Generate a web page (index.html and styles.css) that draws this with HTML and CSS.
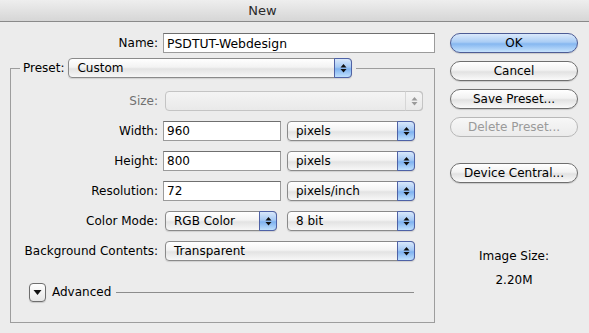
FILE: index.html
```html
<!DOCTYPE html>
<html lang="en">
<head>
    <meta charset="UTF-8">
    <title>New</title>
    <link rel="stylesheet" href="styles.css">
</head>
<body>
    <div class="titlebar">New</div>
    <div class="content">
        <div class="form">
            <div class="name-row">
                <label class="lbl">Name:</label>
                <input class="field name-field" type="text" value="PSDTUT-Webdesign">
            </div>
            <fieldset class="group">
                <legend class="group-head">
                    <span class="lbl">Preset:</span>
                    <div class="popup preset-popup"><span>Custom</span><span class="arrows"><svg width="7" height="10" viewBox="0 0 7 10"><path d="M3.5 1 L6.5 4.5 H0.5Z M3.5 9.5 L6.5 6 H0.5Z" fill="#111"/></svg></span></div>
                </legend>
                <div class="grid">
                    <label class="lbl disabled">Size:</label>
                    <div class="controls">
                        <div class="popup size-popup off"><span></span><span class="arrows"><svg width="7" height="10" viewBox="0 0 7 10"><path d="M3.5 1 L6.5 4.5 H0.5Z M3.5 9.5 L6.5 6 H0.5Z" fill="#9a9a9a"/></svg></span></div>
                    </div>

                    <label class="lbl">Width:</label>
                    <div class="controls">
                        <input class="field num-field" type="text" value="960">
                        <div class="popup unit-popup"><span>pixels</span><span class="arrows"><svg width="7" height="10" viewBox="0 0 7 10"><path d="M3.5 1 L6.5 4.5 H0.5Z M3.5 9.5 L6.5 6 H0.5Z" fill="#111"/></svg></span></div>
                    </div>

                    <label class="lbl">Height:</label>
                    <div class="controls">
                        <input class="field num-field" type="text" value="800">
                        <div class="popup unit-popup"><span>pixels</span><span class="arrows"><svg width="7" height="10" viewBox="0 0 7 10"><path d="M3.5 1 L6.5 4.5 H0.5Z M3.5 9.5 L6.5 6 H0.5Z" fill="#111"/></svg></span></div>
                    </div>

                    <label class="lbl">Resolution:</label>
                    <div class="controls">
                        <input class="field num-field" type="text" value="72">
                        <div class="popup unit-popup"><span>pixels/inch</span><span class="arrows"><svg width="7" height="10" viewBox="0 0 7 10"><path d="M3.5 1 L6.5 4.5 H0.5Z M3.5 9.5 L6.5 6 H0.5Z" fill="#111"/></svg></span></div>
                    </div>

                    <label class="lbl">Color Mode:</label>
                    <div class="controls">
                        <div class="popup mode-popup"><span>RGB Color</span><span class="arrows"><svg width="7" height="10" viewBox="0 0 7 10"><path d="M3.5 1 L6.5 4.5 H0.5Z M3.5 9.5 L6.5 6 H0.5Z" fill="#111"/></svg></span></div>
                        <div class="popup unit-popup"><span>8 bit</span><span class="arrows"><svg width="7" height="10" viewBox="0 0 7 10"><path d="M3.5 1 L6.5 4.5 H0.5Z M3.5 9.5 L6.5 6 H0.5Z" fill="#111"/></svg></span></div>
                    </div>

                    <label class="lbl">Background Contents:</label>
                    <div class="controls">
                        <div class="popup bg-popup"><span>Transparent</span><span class="arrows"><svg width="7" height="10" viewBox="0 0 7 10"><path d="M3.5 1 L6.5 4.5 H0.5Z M3.5 9.5 L6.5 6 H0.5Z" fill="#111"/></svg></span></div>
                    </div>
                </div>
                <div class="advanced">
                    <span class="disclosure"><svg width="9" height="7" viewBox="0 0 9 7"><path d="M0.5 1 H8.5 L4.5 6Z" fill="#111"/></svg></span>
                    <span>Advanced</span>
                    <span class="rule"></span>
                </div>
            </fieldset>
        </div>
        <div class="side">
            <button class="btn default">OK</button>
            <button class="btn">Cancel</button>
            <button class="btn">Save Preset...</button>
            <button class="btn" disabled>Delete Preset...</button>
            <button class="btn device">Device Central...</button>
            <div class="size-label">Image Size:</div>
            <div class="size-value">2.20M</div>
        </div>
    </div>
</body>
</html>
```

FILE: styles.css
```css
body {
    margin: 0;
    background-color: #ececec;
    font-family: "DejaVu Sans", Verdana, sans-serif;
    font-size: 12px;
    color: #000;
}

.titlebar {
    height: 21px;
    line-height: 21px;
    border-bottom: 1px solid #8a8a8a;
    background: linear-gradient(#eeeeee, #d6d6d6);
    text-align: center;
    padding-right: 64px;
    font-size: 13px;
    color: #2a2a2a;
}

.content {
    display: flex;
    gap: 15px;
    padding: 11px 0 0 10px;
}

.form {
    width: 425px;
}

.name-row {
    display: flex;
    align-items: center;
    gap: 5px;
}

.lbl {
    white-space: nowrap;
}

.name-row .lbl {
    width: 148px;
    text-align: right;
}

.field {
    box-sizing: border-box;
    height: 20px;
    margin: 0;
    padding: 0 3px;
    border: 1px solid #9b9b9b;
    border-top-color: #6f6f6f;
    background: #fff;
    font-family: inherit;
    font-size: 12px;
    color: #000;
    outline: none;
}

.name-field {
    width: 272px;
    font-size: 12.4px;
}

.num-field {
    width: 118px;
}

/* group box */
.group {
    margin: 5px 0 0;
    padding: 13px 0 20px;
    border: 1px solid #9d9d9d;
    min-width: 0;
}

.group-head {
    display: flex;
    align-items: center;
    gap: 4px;
    margin-left: 9px;
    padding: 0 4px 0 3px;
}

.popup {
    box-sizing: border-box;
    height: 20px;
    display: flex;
    align-items: center;
    padding-left: 8px;
    border: 1px solid #8a8a8a;
    border-radius: 4px;
    background: linear-gradient(#ffffff, #f3f3f3 45%, #e3e3e3 55%, #f7f7f7);
    box-shadow: 0 1px 1px rgba(0, 0, 0, 0.12);
    white-space: nowrap;
}

.arrows {
    box-sizing: border-box;
    margin: -1px -1px -1px auto;
    width: 18px;
    height: 20px;
    display: flex;
    align-items: center;
    justify-content: center;
    border: 1px solid #4f62a6;
    border-radius: 0 4px 4px 0;
    background: linear-gradient(#d9e8fb, #a5c9f4 45%, #7fb2ef 55%, #bfe0fd);
}

.popup.off {
    border-color: #c4c4c4;
    background: linear-gradient(#f4f4f4, #e9e9e9);
    box-shadow: none;
}

.popup.off .arrows {
    border-color: #c4c4c4;
    border-left-color: #d6d6d6;
    background: transparent;
}

.preset-popup { width: 284px; }
.size-popup { width: 258px; margin-left: 2px; }
.unit-popup { width: 128px; }
.mode-popup { width: 112px; margin-left: 2px; margin-right: 4px; }
.bg-popup { width: 250px; margin-left: 2px; }

.grid {
    display: grid;
    grid-template-columns: 147px auto;
    column-gap: 5px;
    row-gap: 10px;
    align-items: center;
}

.grid .lbl {
    text-align: right;
}

.lbl.disabled {
    color: #707070;
}

.controls {
    display: flex;
    align-items: center;
    gap: 6px;
}

.advanced {
    display: flex;
    align-items: center;
    gap: 5px;
    height: 20px;
    margin: 21px 20px 0 18px;
}

.disclosure {
    box-sizing: border-box;
    width: 17px;
    height: 19px;
    display: flex;
    align-items: center;
    justify-content: center;
    border: 1px solid #6e6e6e;
    border-radius: 4px;
    background: linear-gradient(#ffffff, #e6e6e6);
    box-shadow: 0 1px 1px rgba(0, 0, 0, 0.15);
    margin-right: 1px;
}

.rule {
    flex: 1;
    height: 1px;
    background: #8c8c8c;
}

/* buttons */
.side {
    width: 128px;
    display: flex;
    flex-direction: column;
    gap: 8px;
}

.btn {
    box-sizing: border-box;
    height: 20px;
    padding: 0;
    border: 1px solid #6f6f6f;
    border-radius: 10px;
    background: linear-gradient(#ffffff, #f2f2f2 45%, #e2e2e2 55%, #fafafa);
    box-shadow: 0 1px 1px rgba(0, 0, 0, 0.15);
    font-family: inherit;
    font-size: 12px;
    color: #000;
}

.btn.default {
    border-color: #4d5c95;
    background: linear-gradient(#dbe9fb, #aacdf5 45%, #86b7f0 55%, #c6e3fd);
}

.btn:disabled {
    border-color: #b8b8b8;
    color: #9a9a9a;
    box-shadow: none;
    background: linear-gradient(#f7f7f7, #ebebeb);
}

.btn.device {
    margin-top: 18px;
}

.size-label {
    margin-top: 58px;
    text-align: center;
}

.size-value {
    margin-top: 2px;
    text-align: center;
}
```
